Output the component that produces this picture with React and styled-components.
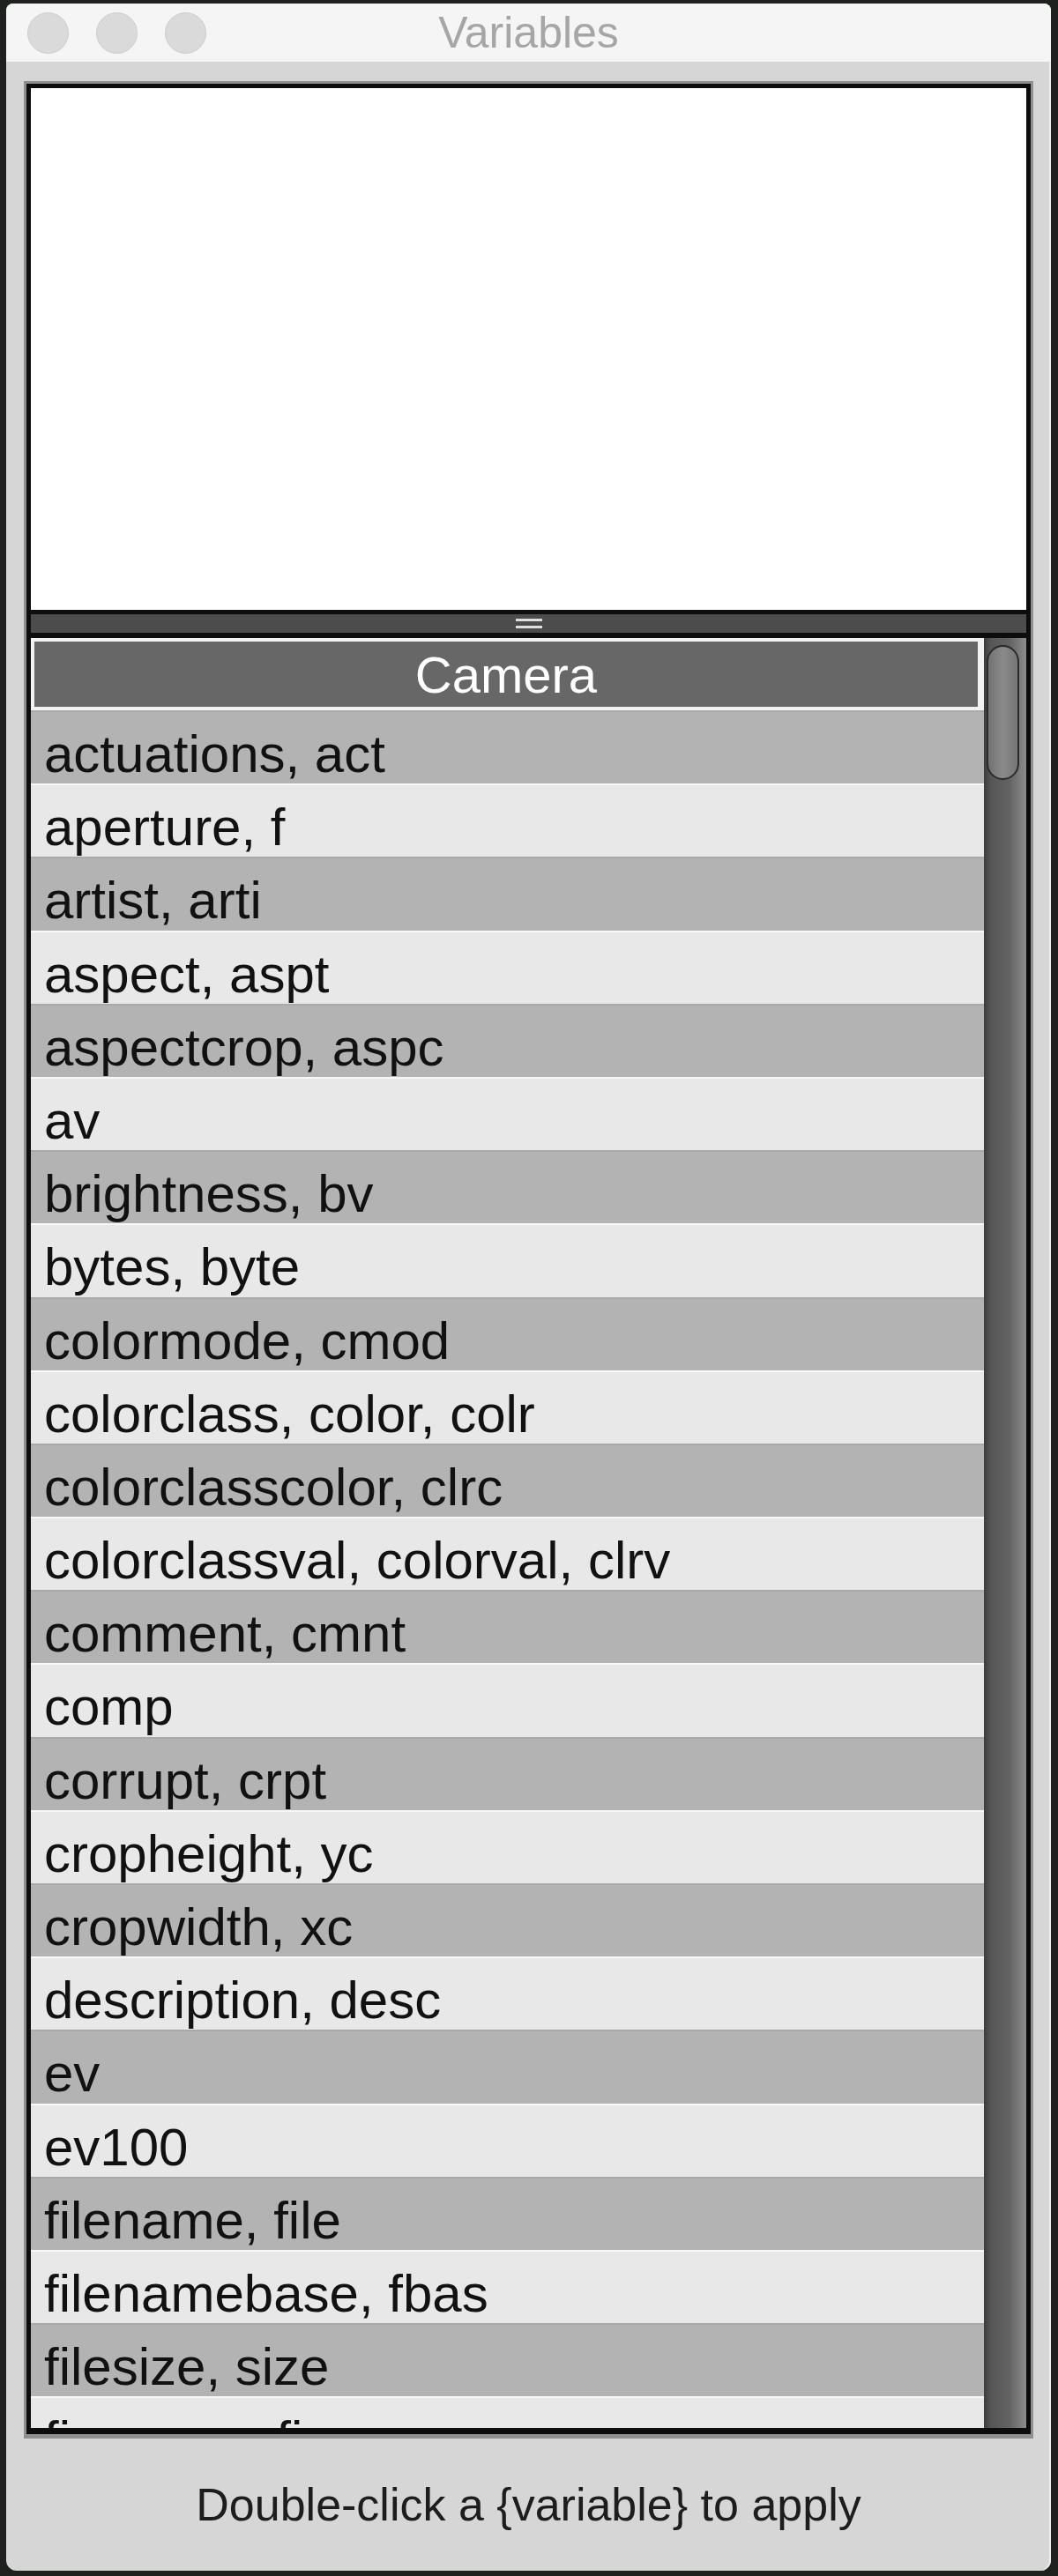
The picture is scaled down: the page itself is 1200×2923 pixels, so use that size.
import styled, { createGlobalStyle } from 'styled-components'

const GlobalStyle = createGlobalStyle`
  html, body {
    margin: 0;
    padding: 0;
    background: #1f211f;
  }
  * {
    box-sizing: border-box;
  }
`

const variables = [
  'actuations, act',
  'aperture, f',
  'artist, arti',
  'aspect, aspt',
  'aspectcrop, aspc',
  'av',
  'brightness, bv',
  'bytes, byte',
  'colormode, cmod',
  'colorclass, color, colr',
  'colorclasscolor, clrc',
  'colorclassval, colorval, clrv',
  'comment, cmnt',
  'comp',
  'corrupt, crpt',
  'cropheight, yc',
  'cropwidth, xc',
  'description, desc',
  'ev',
  'ev100',
  'filename, file',
  'filenamebase, fbas',
  'filesize, size',
  'firmware, firm',
]

const Window = styled.div`
  margin: 4px 0 0 7px;
  width: 1185px;
  height: 2913px;
  display: flex;
  flex-direction: column;
  background: #d6d6d6;
  border-radius: 8px 8px 12px 12px;
  overflow: hidden;
  font-family: "Liberation Sans", Arial, sans-serif;
  box-shadow: inset -2px 0 0 #ececec;
`

const TitleBar = styled.div`
  height: 66px;
  flex-shrink: 0;
  display: grid;
  grid-template-columns: 1fr auto 1fr;
  align-items: center;
  background: #f5f5f5;
  padding: 0 24px;
`

const Lights = styled.div`
  display: flex;
  gap: 31px;
`

const Light = styled.span`
  width: 47px;
  height: 47px;
  border-radius: 50%;
  background: #dadada;
  border: 1px solid #cdcdcd;
`

const Title = styled.div`
  font-size: 50px;
  color: #a6a6a6;
  line-height: 1;
`

const Body = styled.div`
  flex: 1;
  min-height: 0;
  display: flex;
  flex-direction: column;
  padding: 22px 20px 0 20px;
`

const Frame = styled.div`
  flex: 1;
  min-height: 0;
  display: flex;
  border: 3px solid #8f8f8f;
  border-bottom-width: 5px;
`

const Inner = styled.div`
  flex: 1;
  min-height: 0;
  display: flex;
  flex-direction: column;
  border: 5px solid #0d0d0d;
  border-bottom-width: 7px;
  background: #0d0d0d;
`

const TextArea = styled.div`
  height: 592px;
  flex-shrink: 0;
  background: #ffffff;
`

const Splitter = styled.div`
  height: 21px;
  flex-shrink: 0;
  margin-top: 5px;
  background: #4c4c4c;
  display: flex;
  flex-direction: column;
  align-items: center;
  justify-content: center;
  gap: 5px;
`

const Grip = styled.span`
  width: 30px;
  height: 3px;
  background: #dedede;
`

const ListArea = styled.div`
  flex: 1;
  min-height: 0;
  margin-top: 6px;
  display: flex;
`

const List = styled.div`
  flex: 1;
  overflow: hidden;
  background: #e8e8e8;
`

const Header = styled.div`
  height: 82px;
  border: 4px solid #f2f2f2;
  border-right-width: 7px;
  background: #676767;
  color: #ffffff;
  font-size: 58px;
  display: flex;
  align-items: center;
  justify-content: center;
`

const Row = styled.div`
  height: 83.2px;
  padding: 13px 0 0 15px;
  font-size: 60px;
  line-height: 69px;
  color: #111111;
  white-space: nowrap;
  background: ${(p) => (p.$dark ? '#b3b3b3' : '#e8e8e8')};
  border-top: 2px solid ${(p) => (p.$dark ? '#a9a9a9' : '#f8f8f8')};
`

const Scrollbar = styled.div`
  width: 48px;
  flex-shrink: 0;
  padding: 8px 8px 0 3px;
  background: linear-gradient(to right, #3b3b3b 0%, #555555 15%, #636363 60%, #7d7d7d 85%, #8c8c8c 100%);
`

const Thumb = styled.div`
  height: 153px;
  border-radius: 19px;
  border: 2px solid #2b2b2b;
  background: linear-gradient(to right, #727272, #8a8a8a 50%, #767676);
`

const Footer = styled.div`
  height: 150px;
  flex-shrink: 0;
  display: flex;
  align-items: center;
  justify-content: center;
  font-size: 52px;
  color: #1d1d1d;
`

const App = () => {
  return (
    <>
      <GlobalStyle />
      <Window>
        <TitleBar>
          <Lights>
            <Light />
            <Light />
            <Light />
          </Lights>
          <Title>Variables</Title>
          <div />
        </TitleBar>
        <Body>
          <Frame>
            <Inner>
              <TextArea />
              <Splitter>
                <Grip />
                <Grip />
              </Splitter>
              <ListArea>
                <List>
                  <Header>Camera</Header>
                  {variables.map((v, i) => (
                    <Row key={v} $dark={i % 2 === 0}>{v}</Row>
                  ))}
                </List>
                <Scrollbar>
                  <Thumb />
                </Scrollbar>
              </ListArea>
            </Inner>
          </Frame>
          <Footer>Double-click a {'{variable}'} to apply</Footer>
        </Body>
      </Window>
    </>
  )
}

export default App
